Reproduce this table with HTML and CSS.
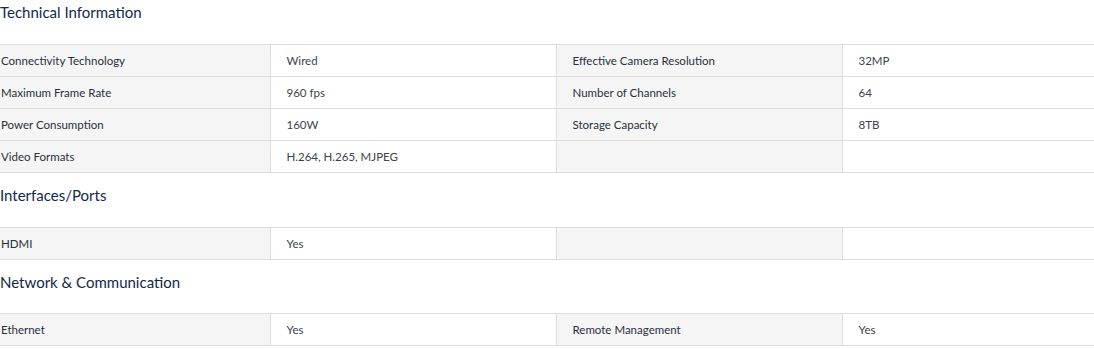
FILE: index.html
```html
<!DOCTYPE html>
<html lang="en">
<head>
<meta charset="utf-8">
<title>Technical Information</title>
<link rel="stylesheet" href="styles.css">
</head>
<body>
<div class="specs">
  <section class="spec-group">
    <h3 class="spec-title spec-title--first">Technical Information</h3>
    <table class="spec-table">
      <colgroup><col class="c1"><col class="c2"><col class="c3"><col class="c4"></colgroup>
      <tr><th>Connectivity Technology</th><td>Wired</td><th>Effective Camera Resolution</th><td>32MP</td></tr>
      <tr><th>Maximum Frame Rate</th><td>960 fps</td><th>Number of Channels</th><td>64</td></tr>
      <tr><th>Power Consumption</th><td>160W</td><th>Storage Capacity</th><td>8TB</td></tr>
      <tr><th>Video Formats</th><td>H.264, H.265, MJPEG</td><th></th><td></td></tr>
    </table>
  </section>
  <section class="spec-group">
    <h3 class="spec-title">Interfaces/Ports</h3>
    <table class="spec-table">
      <colgroup><col class="c1"><col class="c2"><col class="c3"><col class="c4"></colgroup>
      <tr><th>HDMI</th><td>Yes</td><th></th><td></td></tr>
    </table>
  </section>
  <section class="spec-group">
    <h3 class="spec-title">Network &amp; Communication</h3>
    <table class="spec-table">
      <colgroup><col class="c1"><col class="c2"><col class="c3"><col class="c4"></colgroup>
      <tr><th>Ethernet</th><td>Yes</td><th>Remote Management</th><td>Yes</td></tr>
    </table>
  </section>
</div>
</body>
</html>
```
FILE: styles.css
```css
html, body {
  margin: 0;
  padding: 0;
  background: #ffffff;
}

.specs {
  font-family: "Lato", "Noto Sans", sans-serif;
  color: #333a44;
}

.spec-title {
  margin: 12px 0 21.5px;
  font-size: 15px;
  line-height: 20px;
  font-weight: 400;
  color: #10294a;
}

.spec-title--first {
  margin: 2px 0 22px;
}

.spec-table {
  width: 100%;
  border-collapse: collapse;
  table-layout: fixed;
  font-size: 11.5px;
}

.c1 { width: 270px; }
.c2 { width: 286px; }
.c3 { width: 286px; }

.spec-table th,
.spec-table td {
  height: 32px;
  padding: 0 16px;
  border: 1px solid #dedede;
  text-align: left;
  vertical-align: middle;
  font-weight: 400;
  box-sizing: border-box;
}

.spec-table tr > :first-child {
  padding-left: 1px;
  border-left: none;
}

.spec-table tr > :last-child {
  border-right: none;
}

.spec-table th {
  background: #f5f5f5;
  color: #27303d;
}

.spec-table td {
  color: #3d434c;
}
```
